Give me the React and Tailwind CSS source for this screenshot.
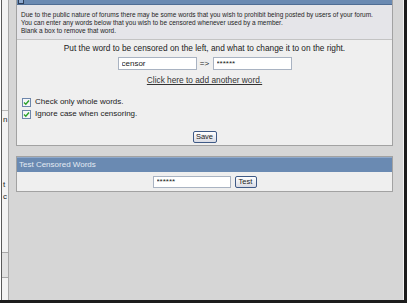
import React from 'react';

const Check = () => (
    <span className="w-[9px] h-[9px] border border-[#6d86ab] bg-[#f4f6f9] flex items-center justify-center">
        <svg width="7" height="7" viewBox="0 0 7 7">
            <path d="M1 3.5 L2.8 5.3 L6 1.5" stroke="#2aa12a" strokeWidth="1.4" fill="none" />
        </svg>
    </span>
);

const App = () => {
    return (
        <div className="w-[407px] h-[306px] bg-white font-['Liberation_Sans',Arial,sans-serif] text-[#222]">
            <div className="h-[303px] flex border-r-[3px] border-b-[3px] border-[#1c1c1c]">

                {/* cut-off sidebar on the left */}
                <div className="w-[9px] flex">
                    <div className="w-px bg-white" />
                    <div className="w-px bg-[#5a5a5a]" />
                    <div className="flex-1 flex flex-col bg-[#f3f3f3] border-r border-[#a9a9a9] overflow-hidden">
                        <div className="h-[110px]" />
                        <div className="border-t border-[#b8b8b8] h-[70px] text-[8px] leading-[10px] pl-[1px] pt-[4px]">n</div>
                        <div className="h-[12px] text-[8px] leading-[10px] pl-[1px]">t</div>
                        <div className="h-[60px] text-[8px] leading-[10px] pl-[1px]">c</div>
                        <div className="h-[26px] border-y border-[#a9a9a9] bg-[#e2e2e2]" />
                        <div className="flex-1" />
                    </div>
                </div>

                {/* main area */}
                <div className="flex-1 bg-[#d6d6d6] pl-[7px] pr-[10px] border-r border-[#f2f2f2]">

                    {/* Censor words panel */}
                    <div className="border-x border-b border-[#a2a2a2]">
                        <div className="h-[5px] bg-[#6a8ab2] border-b border-[#4f6d94] flex">
                            <span className="ml-px w-[6px] h-[4px] border border-t-0 border-[#2d3e58] bg-[#8eaad0]" />
                        </div>
                        <div className="h-[35px] bg-[#e5e5e9] border-b border-[#c3c3c3] pl-[4px] pt-[6px] text-[6.5px] leading-[8px] text-[#1e1e1e]">
                            <p>Due to the public nature of forums there may be some words that you wish to prohibit being posted by users of your forum.</p>
                            <p>You can enter any words below that you wish to be censored whenever used by a member.</p>
                            <p>Blank a box to remove that word.</p>
                        </div>
                        <div className="h-[105px] bg-[#efefef] flex flex-col pt-[3px]">
                            <p className="text-center text-[8.3px] leading-[10px]">Put the word to be censored on the left, and what to change it to on the right.</p>
                            <div className="mt-[4px] flex justify-center items-center">
                                <input readOnly value="censor" className="w-[79px] h-[13px] border border-[#a9b3c2] bg-white px-[3px] text-[8px] outline-none" />
                                <span className="w-[16px] text-center text-[8px]">=&gt;</span>
                                <input readOnly value="******" className="w-[79px] h-[13px] border border-[#a9b3c2] bg-white px-[3px] text-[8px] outline-none" />
                            </div>
                            <p className="mt-[5px] text-center text-[8.3px] leading-[10px] underline text-[#333]">Click here to add another word.</p>
                            <label className="mt-[11px] pl-[5px] flex items-center gap-[4px] h-[12px] text-[8px]">
                                <Check />
                                Check only whole words.
                            </label>
                            <label className="pl-[5px] flex items-center gap-[4px] h-[12px] text-[8px]">
                                <Check />
                                Ignore case when censoring.
                            </label>
                            <div className="mt-[11px] flex justify-center">
                                <button className="w-[24px] h-[12px] rounded-[2px] border border-[#3f5a86] bg-gradient-to-b from-white to-[#d9dbe4] text-[7.5px] leading-[10px]">Save</button>
                            </div>
                        </div>
                    </div>

                    {/* Test panel */}
                    <div className="mt-[10px] border border-[#a2a2a2]">
                        <div className="h-[15px] bg-[#6a8ab2] border-t border-[#8fa9cb] pl-[2px] text-[8px] leading-[14px] text-[#e4eaf3]">Test Censored Words</div>
                        <div className="h-[19px] bg-[#efefef] flex justify-center items-start pt-[4px] gap-[4px]">
                            <input readOnly value="******" className="w-[78px] h-[12px] border border-[#a9b3c2] bg-white px-[3px] text-[8px] outline-none" />
                            <button className="w-[22px] h-[12px] rounded-[2px] border border-[#3f5a86] bg-gradient-to-b from-white to-[#d9dbe4] text-[7.5px] leading-[10px]">Test</button>
                        </div>
                    </div>

                </div>
            </div>
        </div>
    );
};

export default App;
